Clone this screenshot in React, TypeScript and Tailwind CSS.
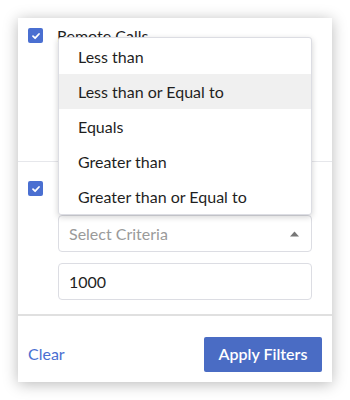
import React from 'react';

const options = ['Less than', 'Less than or Equal to', 'Equals', 'Greater than', 'Greater than or Equal to'];

const Check: React.FC = () => (
  <span className="flex h-[15px] w-[15px] shrink-0 items-center justify-center rounded-[2px] bg-[#4a6fd1]">
    <svg width="10" height="10" viewBox="0 0 10 10" fill="none">
      <path d="M2 5.2 L4.1 7.2 L8 3" stroke="white" strokeWidth="1.8" strokeLinecap="round" strokeLinejoin="round" />
    </svg>
  </span>
);

const App: React.FC = () => {
  return (
    <div className="h-[400px] w-[350px] bg-white pt-[18px] pl-[18px]" style={{ fontFamily: 'Lato, "Open Sans", sans-serif' }}>
      <div className="relative flex h-[364px] w-[314px] flex-col bg-white shadow-[0_2px_14px_rgba(0,0,0,0.28)]">
        {/* first filter */}
        <div className="h-[144px] border-b border-[#e6e7eb] px-[10px] pt-[10px]">
          <div className="flex items-start gap-[14px]">
            <Check />
            <span className="-mt-[2px] text-[16px] leading-5 text-[#1f1f1f]">Remote Calls</span>
          </div>
        </div>

        {/* second filter */}
        <div className="h-[152px] px-[10px] pt-[19px]">
          <Check />
          <div className="relative ml-[30px] mt-[19px] w-[254px]">
            <div className="absolute bottom-full left-0 z-10 w-full rounded-[3px] border border-[#dcdde3] bg-white pt-[1px] shadow-[0_2px_6px_rgba(0,0,0,0.18)]">
              {options.map((o, i) => (
                <div
                  key={o}
                  className={`flex h-[35px] items-center pl-[19px] text-[16px] text-[#1f1f1f] ${i === 1 ? 'bg-[#f0f0f0]' : ''}`}
                >
                  {o}
                </div>
              ))}
            </div>
            <div className="flex h-[37px] items-center justify-between rounded-[4px] border border-[#dcdde3] px-[10px]">
              <span className="text-[16px] text-[#9a9a9a]">Select Criteria</span>
              <svg width="9" height="6" viewBox="0 0 9 6" className="mr-[2px]">
                <path d="M0 5.5 L4.5 0.5 L9 5.5 Z" fill="#777" />
              </svg>
            </div>
            <div className="mt-[11px] flex h-[37px] items-center rounded-[4px] border border-[#dcdde3] px-[10px] text-[16px] text-[#1f1f1f]">
              1000
            </div>
          </div>
        </div>

        {/* footer */}
        <div className="flex flex-1 items-center justify-between border-t-2 border-[#e0e0e0] px-[10px] pt-[10px]">
          <button className="text-[16px] text-[#4a6fd1]">Clear</button>
          <button className="h-[35px] w-[118px] rounded-[2px] bg-[#4a6cc4] text-[16px] font-semibold text-white">
            Apply Filters
          </button>
        </div>
      </div>
    </div>
  );
};

export default App;
